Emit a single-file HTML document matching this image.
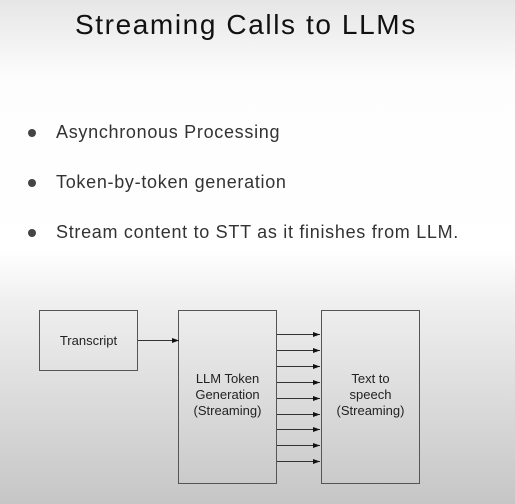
<!DOCTYPE html>
<html><head><style>
body{margin:0;width:515px;height:504px;overflow:hidden;font-family:"Liberation Sans",sans-serif;
background:linear-gradient(to bottom,#e6e6e6 0px,#fdfdfd 80px,#ffffff 250px,#f0f0f0 300px,#c6c6c6 504px);position:relative}
.t{position:absolute;left:75px;top:9px;font-size:28px;color:#111;letter-spacing:1.6px;white-space:nowrap}
.b{position:absolute;left:56px;font-size:18px;color:#333;white-space:nowrap;letter-spacing:0.7px}
.d{position:absolute;left:28px;width:8px;height:8px;border-radius:50%;background:#444}
.box{position:absolute;border:1px solid #555;box-sizing:border-box;display:flex;align-items:center;justify-content:center;text-align:center;font-size:13px;line-height:16px;color:#222}
</style></head><body>
<div class="t">Streaming Calls to LLMs</div>
<div class="d" style="top:129px"></div><div class="b" style="top:122px">Asynchronous Processing</div>
<div class="d" style="top:179px"></div><div class="b" style="top:172px">Token-by-token generation</div>
<div class="d" style="top:229px"></div><div class="b" style="top:222px">Stream content to STT as it finishes from LLM.</div>
<div class="box" style="left:39px;top:310px;width:99px;height:61px">Transcript</div>
<div class="box" style="left:178px;top:310px;width:99px;height:174px;padding-bottom:4px">LLM Token<br>Generation<br>(Streaming)</div>
<div class="box" style="left:321px;top:310px;width:99px;height:174px;padding-bottom:4px">Text to<br>speech<br>(Streaming)</div>
<svg style="position:absolute;left:0;top:0" width="515" height="504">
<defs><marker id="a" markerWidth="7" markerHeight="5" refX="7" refY="2.5" orient="auto" markerUnits="userSpaceOnUse"><path d="M0,0L7,2.5L0,5z" fill="#111"/></marker></defs>
<g stroke="#333" stroke-width="1">
<line x1="138" y1="340.5" x2="179" y2="340.5" marker-end="url(#a)"/>
<line x1="277" y1="334.5" x2="320" y2="334.5" marker-end="url(#a)"/>
<line x1="277" y1="350.5" x2="320" y2="350.5" marker-end="url(#a)"/>
<line x1="277" y1="366.5" x2="320" y2="366.5" marker-end="url(#a)"/>
<line x1="277" y1="382.5" x2="320" y2="382.5" marker-end="url(#a)"/>
<line x1="277" y1="398.5" x2="320" y2="398.5" marker-end="url(#a)"/>
<line x1="277" y1="414.5" x2="320" y2="414.5" marker-end="url(#a)"/>
<line x1="277" y1="429.5" x2="320" y2="429.5" marker-end="url(#a)"/>
<line x1="277" y1="445.5" x2="320" y2="445.5" marker-end="url(#a)"/>
<line x1="277" y1="461.5" x2="320" y2="461.5" marker-end="url(#a)"/>
</g></svg>
</body></html>
